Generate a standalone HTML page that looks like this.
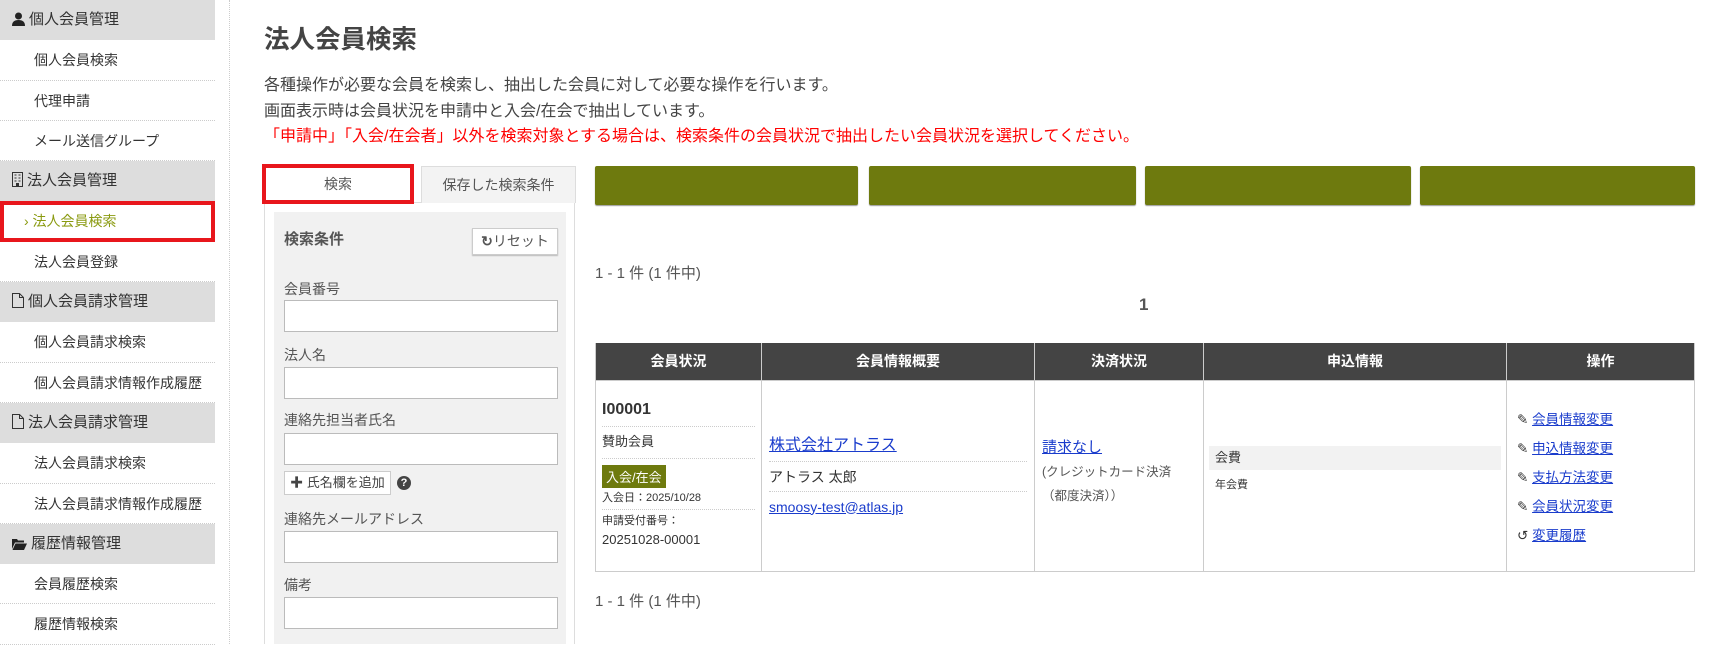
<!DOCTYPE html>
<html><head><meta charset="utf-8">
<style>
*{box-sizing:border-box;margin:0;padding:0}
body{width:1719px;height:644px;overflow:hidden;background:#fff;font-family:"Liberation Sans","Noto Sans CJK JP",sans-serif;color:#333;position:relative;font-size:14px}
.a{position:absolute}
.side{position:absolute;left:0;top:0;width:215px}
.row{height:40.3px;line-height:40.3px;font-size:14px;padding-left:34px;border-bottom:1px dotted #ccc;white-space:nowrap}
.hd{background:#ddd;padding-left:12px;font-size:15px;border-bottom:none}
.hd svg{vertical-align:-2px;margin-right:4px}
.vline{position:absolute;left:229px;top:0;height:644px;border-left:1px dotted #ccc}
.in{position:absolute;left:284px;width:274px;height:32px;background:#fff;border:1px solid #bbb}
.lbl{position:absolute;left:284px;font-size:14px;color:#555}
.gb{position:absolute;top:166px;height:39px;background:#6e7a0e;border-radius:2px;box-shadow:0 1px 1px #999}
table{position:absolute;left:595px;top:343px;width:1100px;border-collapse:collapse}
th{background:#444;color:#fff;height:37px;font-size:14px;border:1px solid #ccc;border-top:0}
td{border:1px solid #ccc;vertical-align:middle;height:191px;position:relative;font-size:14px}
a{color:#1a3ccc;text-decoration:underline}
.ln{border-bottom:1px dotted #ccc}
</style></head><body>
<div class="side">
<div class="row hd"><svg width="13" height="14" viewBox="0 0 13 14"><circle cx="6.5" cy="4" r="3.5" fill="#222"/><path d="M0 14 Q0 8 6.5 8 Q13 8 13 14Z" fill="#222"/></svg>個人会員管理</div>
<div class="row">個人会員検索</div>
<div class="row">代理申請</div>
<div class="row">メール送信グループ</div>
<div class="row hd"><svg width="11" height="15" viewBox="0 0 11 15"><rect x="0.5" y="0.5" width="10" height="14" fill="none" stroke="#333"/><path d="M2.5 3h2M6.5 3h2M2.5 6h2M6.5 6h2M2.5 9h2M6.5 9h2" stroke="#333"/><rect x="4" y="11" width="3" height="4" fill="#333"/></svg>法人会員管理</div>
<div class="row" style="border:4px solid #e8161c;line-height:32px;padding-left:20px;color:#8a9a10">› 法人会員検索</div>
<div class="row">法人会員登録</div>
<div class="row hd"><svg width="12" height="15" viewBox="0 0 12 15"><path d="M0.5 0.5h7l4 4v10h-11z M7.5 0.5v4h4" fill="none" stroke="#333"/></svg>個人会員請求管理</div>
<div class="row">個人会員請求検索</div>
<div class="row">個人会員請求情報作成履歴</div>
<div class="row hd"><svg width="12" height="15" viewBox="0 0 12 15"><path d="M0.5 0.5h7l4 4v10h-11z M7.5 0.5v4h4" fill="none" stroke="#333"/></svg>法人会員請求管理</div>
<div class="row">法人会員請求検索</div>
<div class="row">法人会員請求情報作成履歴</div>
<div class="row hd"><svg width="15" height="12" viewBox="0 0 15 12"><path d="M0 1h5l1 1.5h6v2H3L0 11z" fill="#222"/><path d="M3.5 5.5H15L12 12H0.5z" fill="#222"/></svg>履歴情報管理</div>
<div class="row">会員履歴検索</div>
<div class="row">履歴情報検索</div>
</div>
<div class="vline"></div>
<div class="a" style="left:264px;top:19px;font-size:25.5px;font-weight:bold;color:#444">法人会員検索</div>
<div class="a" style="left:264px;top:73px;font-size:16px;line-height:25.5px;color:#444;white-space:nowrap">各種操作が必要な会員を検索し、抽出した会員に対して必要な操作を行います。<br>画面表示時は会員状況を申請中と入会/在会で抽出しています。<br><span style="color:#f00">「申請中」「入会/在会者」以外を検索対象とする場合は、検索条件の会員状況で抽出したい会員状況を選択してください。</span></div>
<div class="a" style="left:264px;top:202px;width:311px;height:442px;border:1px solid #ddd;border-bottom:0"></div>
<div class="a" style="left:274px;top:212px;width:292px;height:432px;background:#f1f1f1"></div>
<div class="a" style="left:421px;top:166px;width:155px;height:37px;background:#f3f3f3;border:1px solid #ddd;border-bottom:0;text-align:center;line-height:36px;color:#555">保存した検索条件</div>
<div class="a" style="left:262px;top:164px;width:152px;height:40px;background:#fff;border:4px solid #e8161c;text-align:center;line-height:32px;color:#555">検索</div>
<div class="a" style="left:284px;top:228px;font-size:15px;font-weight:bold;color:#555">検索条件</div>
<div class="a" style="left:472px;top:228px;width:86px;height:27px;background:#fff;border:1px solid #ccc;box-shadow:0 1px 1px #bbb;line-height:25px;text-align:center;color:#555"><b>↻</b>リセット</div>
<div class="lbl" style="top:279px">会員番号</div><div class="in" style="top:300px"></div>
<div class="lbl" style="top:345px">法人名</div><div class="in" style="top:367px"></div>
<div class="lbl" style="top:410px">連絡先担当者氏名</div><div class="in" style="top:433px"></div>
<div class="a" style="left:284px;top:471px;width:107px;height:24px;background:#fff;border:1px solid #ccc;font-size:13px;line-height:22px;text-align:center;color:#444"><b>✚</b> 氏名欄を追加</div>
<div class="a" style="left:397px;top:476px;width:14px;height:14px;border-radius:50%;background:#444;color:#fff;font-size:11px;line-height:14px;text-align:center;font-weight:bold">?</div>
<div class="lbl" style="top:509px">連絡先メールアドレス</div><div class="in" style="top:531px"></div>
<div class="lbl" style="top:575px">備考</div><div class="in" style="top:597px"></div>
<div class="gb" style="left:595px;width:263px"></div>
<div class="gb" style="left:869px;width:267px"></div>
<div class="gb" style="left:1145px;width:266px"></div>
<div class="gb" style="left:1420px;width:275px"></div>
<div class="a" style="left:595px;top:262px;font-size:15px;color:#555">1 - 1 件 (1 件中)</div>
<div class="a" style="left:1139px;top:295px;font-size:17px;font-weight:bold;color:#555">1</div>
<table>
<tr><th style="width:166px">会員状況</th><th style="width:273px">会員情報概要</th><th style="width:169px">決済状況</th><th style="width:303px">申込情報</th><th>操作</th></tr>
<tr>
<td style="padding:0 6px;vertical-align:top;padding-top:14px">
<div class="ln" style="font-weight:bold;font-size:16px;height:32px;line-height:30px">I00001</div>
<div class="ln" style="height:32px;line-height:30px;font-size:13px">賛助会員</div>
<div style="margin-top:6px;display:inline-block;background:#6e7a0e;color:#fff;font-size:13px;padding:2px 4px">入会/在会</div>
<div class="ln" style="font-size:11px;height:22px;line-height:20px">入会日：2025/10/28</div>
<div style="font-size:11px;line-height:22px">申請受付番号：</div>
<div style="font-size:13px;line-height:16px">20251028-00001</div>
</td>
<td style="padding:0 7px">
<div class="ln" style="font-size:16px;height:30px;line-height:28px;margin-top:2px"><a>株式会社アトラス</a></div>
<div class="ln" style="height:30px;line-height:30px">アトラス 太郎</div>
<div style="height:30px;line-height:30px"><a>smoosy-test@atlas.jp</a></div>
</td>
<td style="padding:0 7px"><div style="font-size:15px;line-height:24px;margin-top:-8px"><a>請求なし</a></div><div style="font-size:12.5px;line-height:24px;color:#555;word-break:break-all">(クレジットカード決済（都度決済））</div></td>
<td style="padding:0 5px"><div style="background:#f2f2f2;height:24px;line-height:24px;padding-left:6px;font-size:13px;margin-top:-14px">会費</div><div style="font-size:11px;padding-left:6px;margin-top:6px">年会費</div></td>
<td style="padding-left:10px;font-size:13.5px;line-height:29px;padding-top:4px">
<div>✎ <a>会員情報変更</a></div><div>✎ <a>申込情報変更</a></div><div>✎ <a>支払方法変更</a></div><div>✎ <a>会員状況変更</a></div><div>↺ <a>変更履歴</a></div>
</td></tr>
</table>
<div class="a" style="left:595px;top:590px;font-size:15px;color:#555">1 - 1 件 (1 件中)</div>
</body></html>
